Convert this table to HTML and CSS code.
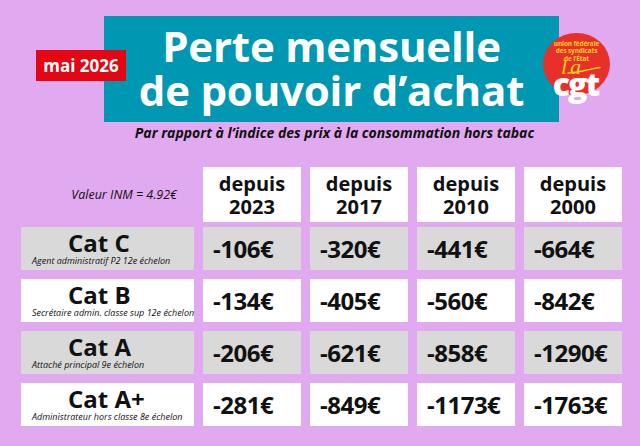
FILE: index.html
```html
<!DOCTYPE html>
<html lang="fr">
<head>
<meta charset="utf-8">
<title>Perte mensuelle de pouvoir d'achat</title>
<link rel="stylesheet" href="styles.css">
</head>
<body>
<div class="page">
  <header class="head">
    <div class="titlebox">
      <h1 class="title">Perte mensuelle<br>de pouvoir d’achat</h1>
    </div>
    <div class="date">mai 2026</div>
    <div class="logo">
      <div class="logo-union">union fédérale<br>des syndicats<br>de l’État</div>
      <div class="logo-la">la</div>
      <svg class="logo-swoosh" width="34" height="8" viewBox="0 0 34 8"><path d="M1 7 C 8 6.5, 14 5.5, 20 4 C 25 3, 29 2, 33 1.5" fill="none" stroke="#ffd21f" stroke-width="1.4" stroke-linecap="round"/></svg>
      <div class="logo-cgt">cgt</div>
    </div>
  </header>
  <p class="sub">Par rapport à l’indice des prix à la consommation hors tabac</p>

  <div class="table">
    <div class="row row-head">
      <div class="inm">Valeur INM = 4.92€</div>
      <div class="hcell">depuis<br>2023</div>
      <div class="hcell">depuis<br>2017</div>
      <div class="hcell">depuis<br>2010</div>
      <div class="hcell">depuis<br>2000</div>
    </div>
    <div class="row grey">
      <div class="label"><span class="cat">Cat C</span><span class="grade">Agent administratif P2 12e échelon</span></div>
      <div class="val">-106€</div>
      <div class="val">-320€</div>
      <div class="val">-441€</div>
      <div class="val">-664€</div>
    </div>
    <div class="row">
      <div class="label"><span class="cat">Cat B</span><span class="grade">Secrétaire admin. classe sup 12e échelon</span></div>
      <div class="val">-134€</div>
      <div class="val">-405€</div>
      <div class="val">-560€</div>
      <div class="val">-842€</div>
    </div>
    <div class="row grey">
      <div class="label"><span class="cat">Cat A</span><span class="grade">Attaché principal 9e échelon</span></div>
      <div class="val">-206€</div>
      <div class="val">-621€</div>
      <div class="val">-858€</div>
      <div class="val">-1290€</div>
    </div>
    <div class="row">
      <div class="label"><span class="cat">Cat A+</span><span class="grade">Administrateur hors classe 8e échelon</span></div>
      <div class="val">-281€</div>
      <div class="val">-849€</div>
      <div class="val">-1173€</div>
      <div class="val">-1763€</div>
    </div>
  </div>
</div>
</body>
</html>
```

FILE: styles.css
```css
* { box-sizing: border-box; }
html, body {
  margin: 0;
  padding: 0;
}
body {
  background: #e1a9ef;
  font-family: "Open Sans", "Noto Sans", sans-serif;
  color: #111;
  width: 640px;
  height: 446px;
  overflow: hidden;
}
.page {
  padding-top: 16px;
}
.head {
  position: relative;
  height: 106px;
}
.titlebox {
  margin-left: 104px;
  width: 455px;
  height: 106px;
  background: #0097b2;
  padding-top: 8px;
}
.title {
  margin: 0;
  color: #fff;
  font-size: 42px;
  line-height: 44px;
  font-weight: 700;
  text-align: center;
  letter-spacing: -0.2px;
}
.date {
  position: absolute;
  left: 36px;
  top: 34px;
  width: 90px;
  height: 31px;
  background: #e30613;
  color: #fff;
  font-weight: 700;
  font-size: 17px;
  line-height: 31px;
  text-align: center;
}
.logo {
  position: absolute;
  left: 543px;
  top: 17px;
  width: 67px;
  height: 62px;
  border-radius: 50%;
  background: #e8302a;
  text-align: center;
}
.logo-union {
  position: absolute;
  left: 0;
  right: 0;
  top: 7px;
  color: #ffd21f;
  font-size: 6.4px;
  line-height: 7.4px;
  font-weight: 700;
  letter-spacing: -0.1px;
}
.logo-la {
  position: absolute;
  left: 18px;
  top: 27px;
  color: #ffd21f;
  font-family: "Liberation Serif", serif;
  font-style: italic;
  font-size: 22px;
  line-height: 14px;
  letter-spacing: 3px;
}
.logo-swoosh {
  position: absolute;
  left: 24px;
  top: 33px;
}
.logo-cgt {
  position: absolute;
  left: 0;
  right: 0;
  top: 41px;
  color: #fff;
  font-size: 32px;
  line-height: 20px;
  font-weight: 800;
  letter-spacing: -2px;
  text-indent: -2px;
}
.sub {
  margin: 3px 0 0;
  text-align: center;
  padding-left: 29px;
  font-size: 14px;
  line-height: 16px;
  font-weight: 700;
  font-style: italic;
  color: #111;
}
.table {
  margin-top: 26px;
  display: flex;
  flex-direction: column;
  gap: 9px;
  padding-left: 21px;
}
.row {
  display: grid;
  grid-template-columns: 173px 98px 98px 98px 98px;
  column-gap: 9px;
  height: 43px;
}
.row-head {
  height: 55px;
  margin-bottom: -4px;
}
.inm {
  display: flex;
  align-items: center;
  justify-content: flex-end;
  padding-right: 17px;
  font-size: 12.5px;
  font-style: italic;
}
.hcell {
  background: #fff;
  display: flex;
  align-items: center;
  justify-content: center;
  text-align: center;
  font-size: 20px;
  line-height: 23px;
  font-weight: 700;
}
.label, .val {
  background: #fff;
}
.grey .label, .grey .val {
  background: #d9d9d9;
}
.label {
  display: flex;
  flex-direction: column;
  justify-content: center;
}
.cat {
  padding-left: 47px;
  font-size: 24px;
  line-height: 24px;
  font-weight: 700;
}
.grade {
  padding-left: 11px;
  font-size: 9px;
  line-height: 11px;
  font-style: italic;
  white-space: nowrap;
}
.val {
  display: flex;
  align-items: center;
  padding-left: 10px;
  font-size: 24px;
  font-weight: 700;
  letter-spacing: -0.5px;
}
```
